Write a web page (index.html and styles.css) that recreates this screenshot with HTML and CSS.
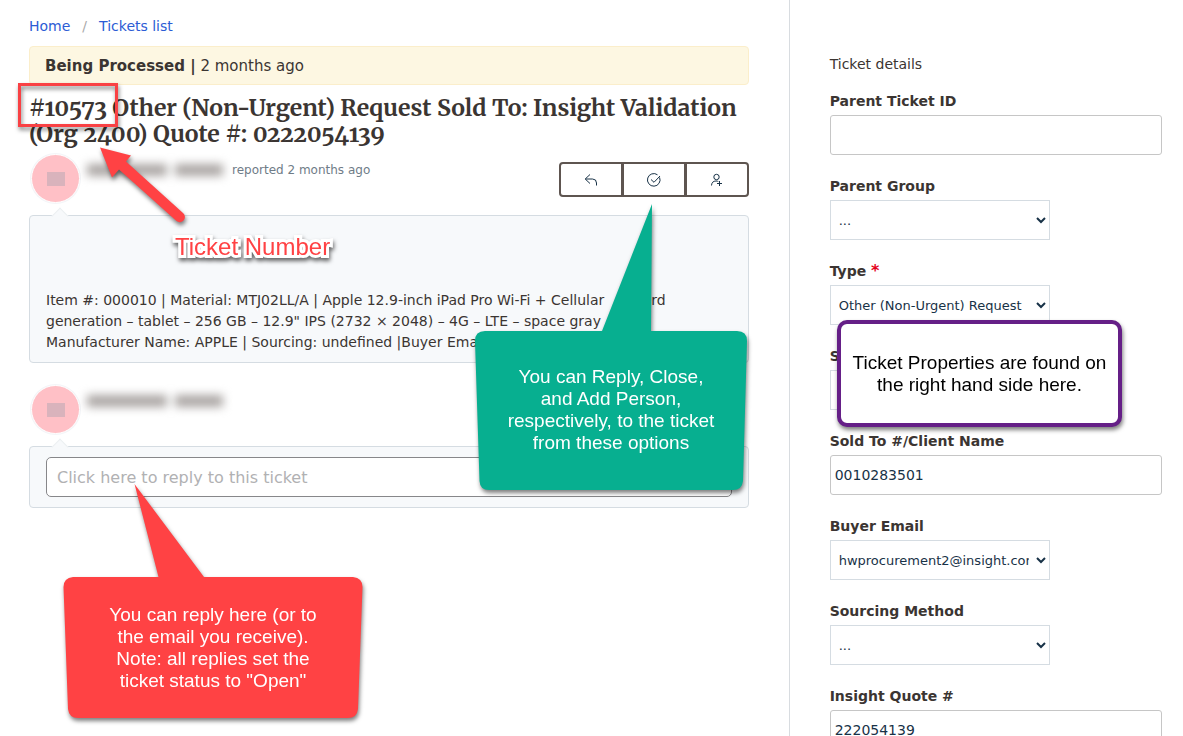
FILE: index.html
```html
<!DOCTYPE html>
<html lang="en">
<head>
  <meta charset="UTF-8" />
  <meta name="viewport" content="width=device-width, initial-scale=1.0" />
  <title>Ticket #10573</title>
  <link rel="stylesheet" href="styles.css">
</head>
<body>
  <div class="page">
    <main class="ticket">
      <nav class="breadcrumb">
        <a href="#">Home</a>
        <span class="slash">/</span>
        <a href="#">Tickets list</a>
      </nav>

      <div class="status"><strong>Being Processed |</strong> 2 months ago</div>

      <h1>#10573 Other (Non-Urgent) Request Sold To: Insight Validation (Org 2400) Quote #: 0222054139</h1>

      <div class="author">
        <div class="avatar"><span></span></div>
        <div class="hidden-name"><i></i><i></i></div>
        <span class="reported">reported 2 months ago</span>
        <div class="actions">
          <button type="button" aria-label="Reply">
            <svg width="16" height="16" viewBox="0 0 16 16"><path d="M7 2.5 2.2 7 7 11.5M2.5 7H9.500Q13.500 7 13.500 11V13.500" /></svg>
          </button>
          <button type="button" aria-label="Close">
            <svg width="16" height="16" viewBox="0 0 16 16"><path d="M13.600 5.500A6.300 6.300 0 1 1 11.500 2.800M5 7.500 8 10.300 14 4" /></svg>
          </button>
          <button type="button" aria-label="Add person">
            <svg width="16" height="16" viewBox="0 0 16 16"><circle cx="7.500" cy="5" r="2.700" /><path d="M2.500 13.500Q2.800 9 7 9Q8.500 9 9.300 9.500M10.500 9V14M8 11.500H13" /></svg>
          </button>
        </div>
      </div>

      <div class="bubble message">
        Item #: 000010 | Material: MTJ02LL/A | Apple 12.9-inch iPad Pro Wi-Fi + Cellular&nbsp;&nbsp;&nbsp;&nbsp;&nbsp; – 3rd<br>
        generation – tablet – 256 GB – 12.9" IPS (2732 × 2048) – 4G – LTE – space gray<br>
        Manufacturer Name: APPLE | Sourcing: undefined |Buyer Email
      </div>

      <div class="author">
        <div class="avatar"><span></span></div>
        <div class="hidden-name"><i></i><i></i></div>
      </div>

      <div class="bubble reply">
        <input type="text" aria-label="Reply" placeholder="Click here to reply to this ticket">
      </div>
    </main>

    <aside class="details">
      <p>Ticket details</p>

      <div class="field">
        <label for="parentId">Parent Ticket ID</label>
        <input type="text" id="parentId">
      </div>

      <div class="field">
        <label for="parentGroup">Parent Group</label>
        <select id="parentGroup"><option>...</option></select>
      </div>

      <div class="field">
        <label for="type">Type <span class="star">*</span></label>
        <select id="type"><option>Other (Non-Urgent) Request</option></select>
      </div>

      <div class="field">
        <label for="status">Status</label>
        <select id="status"><option>...</option></select>
      </div>

      <div class="field">
        <label for="soldTo">Sold To #/Client Name</label>
        <input type="text" id="soldTo" value="0010283501">
      </div>

      <div class="field">
        <label for="buyer">Buyer Email</label>
        <select id="buyer"><option>hwprocurement2@insight.com</option></select>
      </div>

      <div class="field">
        <label for="sourcing">Sourcing Method</label>
        <select id="sourcing"><option>...</option></select>
      </div>

      <div class="field">
        <label for="quote">Insight Quote #</label>
        <input type="text" id="quote" value="222054139">
      </div>
    </aside>

    <!-- notes over the page -->
    <div class="note-frame"></div>

    <svg class="note-arrow" width="100" height="90" viewBox="0 0 100 90">
      <path d="M10 7.500 41 15.500 36 21.500 93 73A5 5 0 0 1 86.500 81L29 29.500 22 37.500Z" />
    </svg>
    <div class="note-title">Ticket Number</div>

    <div class="note note-green">
      <svg width="274" height="287" viewBox="0 0 274 287">
        <path d="M178 0 177 127H263Q273 127 273 137L269 277Q268 286 259 286H15Q6 286 5.500 277L1 137Q1 127 11 127H128Z" />
      </svg>
      <p>You can Reply, Close,<br>and Add Person,<br>respectively, to the ticket<br>from these options</p>
    </div>

    <div class="note note-red">
      <svg width="300" height="235" viewBox="0 0 300 235">
        <path d="M71.500 0 141 93H290Q299.500 94 299.500 103L295 225Q294 234 285 234H15Q6 234 5 225L.5 103Q.5 94 10 93H95.500Z" />
      </svg>
      <p>You can reply here (or to<br>the email you receive).<br>Note: all replies set the<br>ticket status to "Open"</p>
    </div>

    <div class="note note-purple">
      <p>Ticket Properties are found on<br>the right hand side here.</p>
    </div>
  </div>
</body>
</html>
```
FILE: styles.css
```css
* {
  box-sizing: border-box;
}

body {
  margin: 0;
  height: 100vh;
  overflow: hidden;
  font-family: Verdana, "DejaVu Sans", sans-serif;
  font-size: 14px;
  line-height: 21px;
  color: #3b3532;
  background: #fff;
}

.page {
  position: relative;
  display: grid;
  grid-template-columns: 2fr 1fr;
  min-height: 100vh;
}

.ticket {
  padding: 16px 40px 0 29px;
}

.breadcrumb {
  display: flex;
  gap: 12px;
  height: 30px;
}

.breadcrumb a {
  color: #2c5cd5;
  text-decoration: none;
}

.slash {
  color: #aaa;
}

.status {
  padding: 9px 15px 7px;
  border: 1px solid #fbeecb;
  border-radius: 4px;
  background: #fdf7e2;
  font-size: 15px;
}

h1 {
  margin: 10px 0 7px;
  font-family: Merriweather, "DejaVu Serif Condensed", "DejaVu Serif", serif;
  font-size: 23px;
  font-weight: bold;
  font-variant-numeric: oldstyle-nums;
  line-height: 26px;
}

.author {
  display: flex;
  align-items: flex-start;
  gap: 3px;
  height: 48px;
  padding-left: 2px;
}

.avatar {
  display: flex;
  align-items: center;
  justify-content: center;
  width: 49px;
  height: 49px;
  border: 1px solid #fff;
  border-radius: 50%;
  background: #ffc0c6;
  box-shadow: 0 0 0 1px #f3f5f8;
}

.avatar span {
  width: 18px;
  height: 14px;
  background: #d9b3bc;
}

/* name blurred out */
.hidden-name {
  display: flex;
  gap: 8px;
  width: 145px;
  padding: 10px 4px;
  filter: blur(5px);
}

.hidden-name i {
  width: 80px;
  height: 12px;
  background: #aaa5a3;
}

.hidden-name i + i {
  width: 48px;
}

.reported {
  padding: 6px 0 0 1px;
  font-size: 12px;
  color: #6f7c87;
}

.actions {
  display: flex;
  margin: 8px 0 0 auto;
}

.actions button {
  width: 64px;
  height: 35px;
  padding: 0;
  border: 2px solid #5e5550;
  background: #fff;
}

.actions button + button {
  margin-left: -1px;
}

.actions button:first-child {
  border-radius: 4px 0 0 4px;
}

.actions button:last-child {
  border-radius: 0 4px 4px 0;
}

.actions svg {
  display: block;
  margin: auto;
  fill: none;
  stroke: #183247;
}

.bubble {
  position: relative;
  margin: 13px 0 22px;
  border: 1px solid #d5dce2;
  border-radius: 4px;
  background: #f7f9fb;
}

.bubble::before {
  content: "";
  position: absolute;
  top: -6px;
  left: 24px;
  width: 11px;
  height: 11px;
  border: solid #eceff1;
  border-width: 1px 0 0 1px;
  background: #f7f9fb;
  transform: rotate(45deg);
}

.message {
  padding: 74px 16px 9px;
}

.reply {
  padding: 10px 16px;
}

.reply input {
  display: block;
  width: 100%;
  height: 40px;
  padding: 0 10px;
  border: 1px solid #87878a;
  border-radius: 5px;
  font: inherit;
  font-size: 16px;
}

.reply input::placeholder {
  color: #b1b1b3;
}

.details {
  height: 100vh;
  overflow: hidden;
  padding: 54px 21px 0 40px;
  border-left: 1px solid #d8dce0;
}

.details p {
  margin: 0 0 14px;
}

.field {
  margin-bottom: 19px;
}

.field label {
  display: block;
  margin-bottom: 2px;
  font-weight: bold;
  line-height: 24px;
}

.star {
  font-size: 16px;
  line-height: 16px;
  color: #e4001b;
}

.field input {
  display: block;
  width: 100%;
  height: 40px;
  padding: 0 4px;
  border: 1px solid #c6c6c6;
  border-radius: 3px;
  font: inherit;
  color: #183247;
}

.field select {
  display: block;
  width: 220px;
  height: 40px;
  padding: 0 4px;
  border: 1px solid #d5dce2;
  border-radius: 0;
  background: #fff;
  font: inherit;
  font-size: 13px;
  color: #183247;
}

.note-frame {
  position: absolute;
  top: 83px;
  left: 18px;
  width: 100px;
  height: 44px;
  border: 3px solid #f94144;
  filter: drop-shadow(1px 3px 2px rgba(0, 0, 0, 0.5));
}

.note-arrow {
  position: absolute;
  top: 140px;
  left: 90px;
  fill: #ff4244;
  overflow: visible;
  filter: drop-shadow(1px 3px 2px rgba(0, 0, 0, 0.5));
}

.note-title {
  position: absolute;
  top: 233px;
  left: 175px;
  font-family: Arial, "Liberation Sans", sans-serif;
  font-size: 24px;
  line-height: 28px;
  color: #ff4244;
  -webkit-text-stroke: 6px #fff;
  paint-order: stroke fill;
  filter: drop-shadow(1px 3px 2px rgba(0, 0, 0, 0.6));
}

.note {
  position: absolute;
  font-family: Arial, "Liberation Sans", sans-serif;
  font-size: 19px;
  line-height: 22px;
  text-align: center;
  color: #fff;
  filter: drop-shadow(1px 3px 2px rgba(0, 0, 0, 0.5));
}

.note svg {
  display: block;
}

.note p {
  position: absolute;
  right: 0;
  bottom: 37px;
  left: 0;
  margin: 0;
}

.note-green {
  top: 204px;
  left: 474px;
  fill: #07af90;
}

.note-red {
  top: 484px;
  left: 63px;
  fill: #ff4244;
}

.note-red p {
  bottom: 27px;
}

.note-purple {
  top: 320px;
  left: 837px;
  width: 285px;
  height: 107px;
  border: 4px solid #651f87;
  border-radius: 10px;
  background: #fff;
  color: #000;
}

.note-purple p {
  bottom: 27px;
}
```
